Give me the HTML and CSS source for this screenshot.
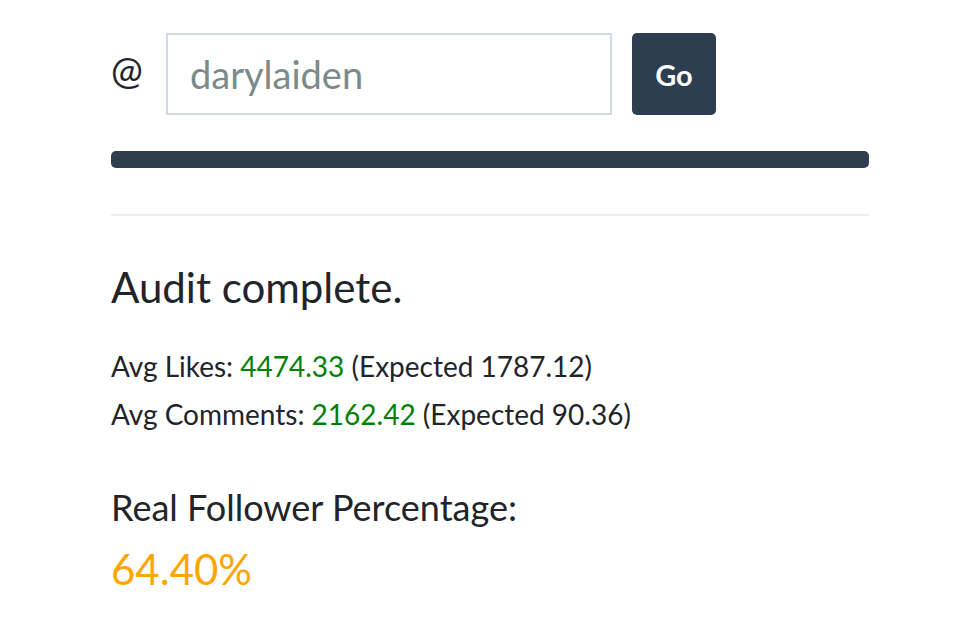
FILE: index.html
```html
<!DOCTYPE html>
<html lang="en">
<head>
    <meta charset="UTF-8">
    <meta name="viewport" content="width=device-width, initial-scale=1.0">
    <title>Follower Audit</title>
    <link rel="stylesheet" href="styles.css">
</head>
<body>
    <div class="container">
        <div class="search-row">
            <span class="at">@</span>
            <input type="text" class="handle-input" value="darylaiden">
            <button class="go-btn">Go</button>
        </div>

        <div class="progress">
            <div class="progress-bar" style="width: 100%"></div>
        </div>

        <hr class="divider">

        <h2 class="status">Audit complete.</h2>
        <p class="stat">Avg Likes: <span class="good">4474.33</span> (Expected 1787.12)</p>
        <p class="stat">Avg Comments: <span class="good">2162.42</span> (Expected 90.36)</p>

        <h3 class="result-label">Real Follower Percentage:</h3>
        <div class="result-value">64.40%</div>
    </div>
</body>
</html>
```

FILE: styles.css
```css
body {
    font-family: Lato, "Open Sans", sans-serif;
    margin: 0;
    padding: 0;
    color: #212529;
    background: #fff;
}
.container {
    width: 758px;
    margin-left: 111px;
    padding-top: 33px;
}
.search-row {
    display: flex;
    align-items: center;
}
.at {
    width: 55px;
    font-size: 38px;
    margin-top: -10px;
}
.handle-input {
    width: 446px;
    height: 82px;
    box-sizing: border-box;
    border: 2px solid #d3dae2;
    padding: 0 22px;
    font-family: inherit;
    font-size: 38px;
    color: #7b8a8b;
    outline: none;
}
.go-btn {
    margin-left: 20px;
    width: 84px;
    height: 82px;
    border: none;
    border-radius: 5px;
    background-color: #2c3e50;
    color: #fff;
    font-family: inherit;
    font-size: 29px;
    font-weight: bold;
}
.progress {
    margin-top: 36px;
    height: 17px;
    border-radius: 5px;
    background-color: #ecf0f1;
    overflow: hidden;
}
.progress-bar {
    height: 100%;
    background-color: #2c3e50;
}
.divider {
    margin: 46px 0 0;
    border: none;
    border-top: 2px solid #eceeef;
}
.status {
    margin: 46px 0 0;
    font-size: 42px;
    font-weight: normal;
    line-height: 1.2;
}
.stat {
    margin: 0;
    font-size: 28px;
    line-height: 48px;
}
.stat:first-of-type {
    margin-top: 30px;
}
.good {
    color: #008000;
}
.result-label {
    margin: 48px 0 0;
    font-size: 36px;
    font-weight: normal;
    line-height: 1.2;
}
.result-value {
    margin-top: 14px;
    font-size: 42px;
    color: #ffa500;
    line-height: 1.2;
}
```
